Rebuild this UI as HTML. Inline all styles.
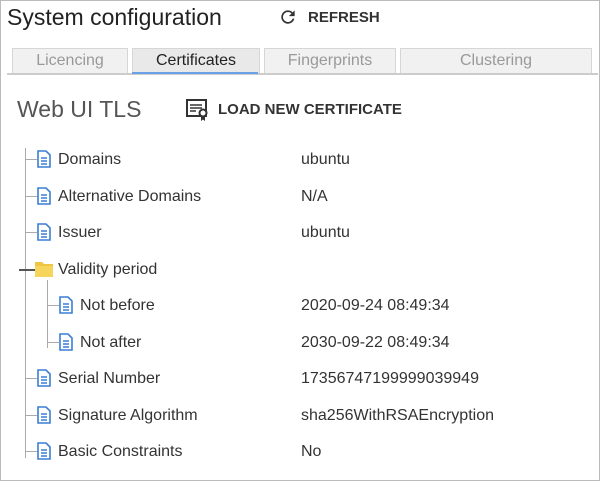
<!DOCTYPE html><html><head><style>
body{margin:0;width:600px;height:481px;overflow:hidden;font-family:"Liberation Sans",sans-serif;background:#fff;position:relative}
.frame{position:absolute;left:0;top:0;width:598px;height:479px;border:1px solid #bbb}
.a{position:absolute;white-space:nowrap}
.tab{position:absolute;top:48px;height:24px;background:#f1f1f1;border:1px solid #d6d6d6;border-bottom:none;color:#999;font-size:16px;text-align:center;line-height:24px}
.row{position:absolute;font-size:16px;color:#333;line-height:20px}
.ln{position:absolute;background:#aaa}
</style></head><body>
<div class="frame"></div>
<div class="a" style="left:7px;top:4px;font-size:23px;color:#222">System configuration</div>
<svg class="a" style="left:278px;top:7px" width="20" height="20" viewBox="0 0 24 24"><path d="M17.6 6.4A8 8 0 1 0 19.7 14h-2.1A6 6 0 1 1 12 6c1.7 0 3.1.7 4.2 1.8L13 11h7V4z" fill="#333"/></svg>
<div class="a" style="left:308px;top:9px;font-size:15px;font-weight:bold;color:#333">REFRESH</div>
<div class="tab" style="left:12px;width:114px">Licencing</div>
<div class="tab" style="left:132px;width:126px;background:#e8e9e8;color:#222">Certificates</div>
<div class="tab" style="left:264px;width:130px">Fingerprints</div>
<div class="tab" style="left:400px;width:190px">Clustering</div>
<div class="a" style="left:7px;top:73px;width:591px;height:2px;background:#ccc"></div>
<div class="a" style="left:132px;top:72px;width:126px;height:2px;background:#6aa0e8"></div>
<div class="a" style="left:17px;top:96px;font-size:23px;color:#555">Web UI TLS</div>
<svg class="a" style="left:186px;top:99px" width="24" height="22" viewBox="0 0 24 22"><rect x="1" y="1" width="19" height="16" fill="none" stroke="#333" stroke-width="2"/><path d="M4 6h12M4 9h12M4 12h6" stroke="#333" stroke-width="1.6"/><circle cx="17" cy="14" r="3.5" fill="#fff" stroke="#333" stroke-width="2"/><path d="M15 17v5l2-1.5 2 1.5v-5" fill="#333"/></svg>
<div class="a" style="left:218px;top:101px;font-size:15px;font-weight:bold;color:#333">LOAD NEW CERTIFICATE</div>
<div class="ln" style="left:25px;top:148px;width:1px;height:310px"></div>
<div class="ln" style="left:47px;top:280px;width:1px;height:68px"></div>
<svg width="0" height="0" style="position:absolute"><defs><g id="d"><path d="M1 1h8l4 4v12H1z" fill="#fff" stroke="#3a7fd5" stroke-width="1.6"/><path d="M4 8h6M4 11h6M4 14h6" stroke="#3a7fd5" stroke-width="1.4"/></g></defs></svg>
<div id="rows"></div>
<script>
var r=[[159,1,'Domains','ubuntu'],[196,1,'Alternative Domains','N/A'],[232,1,'Issuer','ubuntu'],[269,1,'Validity period','',1],[305,2,'Not before','2020-09-24 08:49:34'],[342,2,'Not after','2030-09-22 08:49:34'],[378,1,'Serial Number','17356747199999039949'],[415,1,'Signature Algorithm','sha256WithRSAEncryption'],[451,1,'Basic Constraints','No']];
var h='';r.forEach(function(x){var y=x[0],l=x[1];var lx=l==1?25:47,ix=l==1?37:59,tx=l==1?58:80;
h+='<div class="ln" style="left:'+lx+'px;top:'+y+'px;width:'+(ix-lx)+'px;height:1px"></div>';
if(x[4]){h+='<div class="ln" style="left:19px;top:'+y+'px;width:16px;height:2px;background:#555"></div><svg class="a" style="left:35px;top:'+(y-8)+'px" width="20" height="16"><path d="M0 1h7l2 2h9v13H0z" fill="#f0c542"/><path d="M0 5h18v11H0z" fill="#f6d55c"/></svg>';}
else h+='<svg class="a" style="left:'+ix+'px;top:'+(y-9)+'px" width="14" height="18"><use href="#d"/></svg>';
h+='<div class="row" style="left:'+tx+'px;top:'+(y-9)+'px">'+x[2]+'</div>';
if(x[3])h+='<div class="row" style="left:301px;top:'+(y-9)+'px">'+x[3]+'</div>';});
document.getElementById('rows').innerHTML=h;
</script>
</body></html>
